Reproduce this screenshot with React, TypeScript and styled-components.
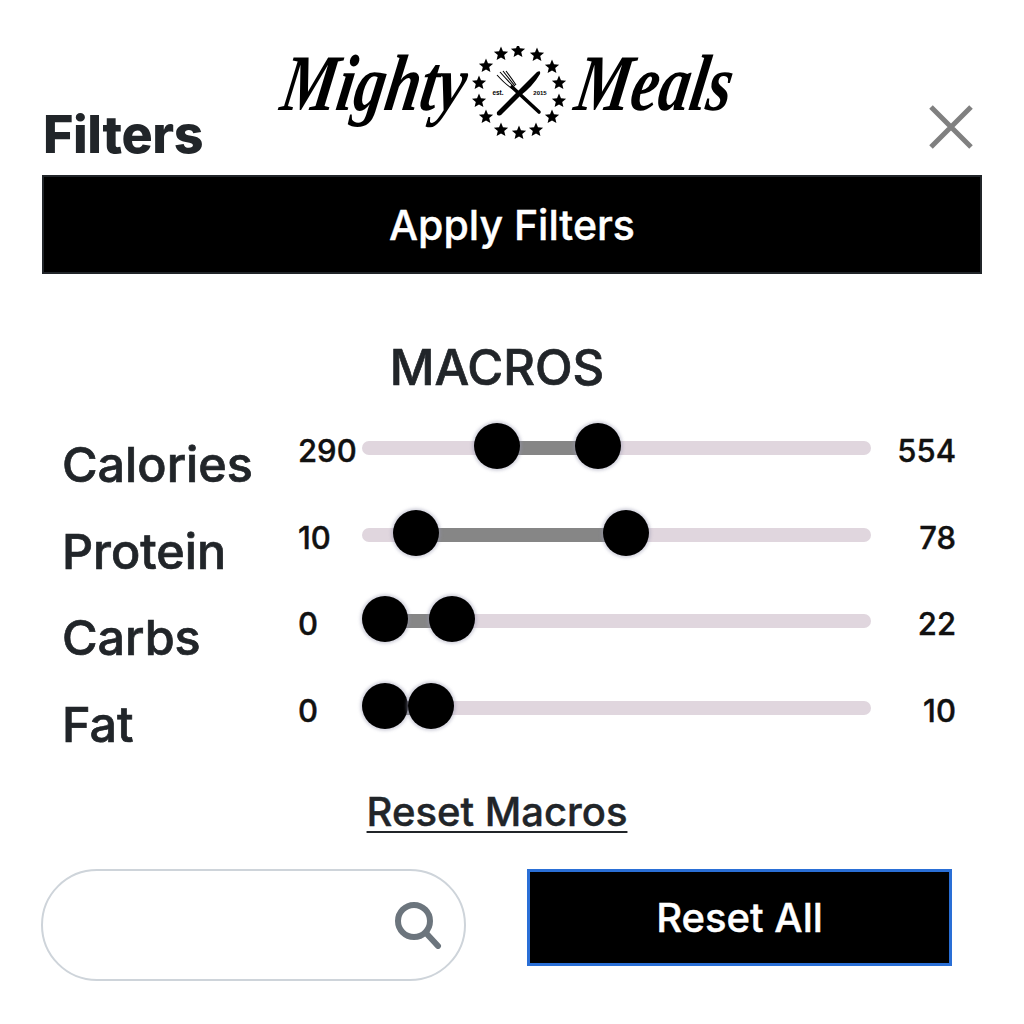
import React from 'react'
import styled, { createGlobalStyle } from 'styled-components'

const GlobalStyle = createGlobalStyle`
  html, body {
    margin: 0;
    background: #fff;
  }
  * {
    box-sizing: border-box;
  }
`

const Page = styled.div`
  width: 1024px;
  height: 1024px;
  padding: 0 42px;
  overflow: hidden;
  font-family: Inter, "Liberation Sans", sans-serif;
  color: #212529;
`

const Header = styled.header`
  height: 175px;
  position: relative;
  display: flex;
  align-items: flex-end;
  justify-content: space-between;
`

const Title = styled.h1`
  margin: 0 0 12px 1px;
  font-size: 52px;
  line-height: 56px;
  font-weight: 800;
  letter-spacing: -0.4px;
`

const Logo = styled.div`
  position: absolute;
  left: 238px;
  top: 45px;
  width: 456px;
  height: 96px;
  display: flex;
  align-items: center;
  color: #000;
`

const LogoWord = styled.span<{ $width: number; $scale: number }>`
  display: block;
  flex: none;
  align-self: flex-start;
  width: ${(p) => p.$width}px;
  font-family: "Liberation Serif", serif;
  font-style: italic;
  font-weight: 700;
  font-size: 80px;
  line-height: 76px;
  white-space: nowrap;
  transform-origin: left center;
  transform: translateX(3px) scaleX(${(p) => p.$scale}) skewX(-12deg);
`

const Emblem = styled.svg`
  flex: none;
  width: 96px;
  height: 94px;
  margin: 0 6px 0 7px;
`

const CloseButton = styled.button`
  width: 44px;
  height: 44px;
  margin: 0 9px 26px 0;
  padding: 0;
  border: 0;
  background: none;
  color: #808080;
  svg {
    display: block;
  }
`

const BlackButton = styled.button`
  display: block;
  background: #000;
  color: #fff;
  font-family: inherit;
  font-weight: 500;
  padding: 0;
  -webkit-text-stroke: 0.4px currentColor;
`

const ApplyButton = styled(BlackButton)`
  width: 940px;
  height: 99px;
  border: 2px solid #212529;
  font-size: 41px;
`

const SectionTitle = styled.h2`
  margin: 68px 0 31px;
  padding-right: 30px;
  text-align: center;
  font-size: 49px;
  line-height: 52px;
  font-weight: 500;
  -webkit-text-stroke: 0.7px currentColor;
`

const MacroList = styled.div`
  padding-left: 20px;
`

const MacroRow = styled.div`
  display: grid;
  grid-template-columns: 236px 64px 509px 85px;
  height: 86.5px;
`

const MacroLabel = styled.div`
  padding-top: 11px;
  font-size: 48.5px;
  line-height: 58px;
  font-weight: 500;
  -webkit-text-stroke: 0.7px currentColor;
`

const Value = styled.div<{ $end?: boolean }>`
  height: 46px;
  margin-top: 3px;
  font-size: 31px;
  line-height: 46px;
  font-weight: 500;
  color: #111;
  text-align: ${(p) => (p.$end ? 'right' : 'left')};
  -webkit-text-stroke: 0.4px currentColor;
`

const Track = styled.div`
  position: relative;
  height: 46px;
  &::before {
    content: '';
    position: absolute;
    left: 0;
    right: 0;
    top: 16px;
    height: 14px;
    border-radius: 7px;
    background: #e0d6de;
  }
`

const Range = styled.div`
  position: absolute;
  top: 16px;
  height: 14px;
  background: #868686;
`

const Thumb = styled.div`
  position: absolute;
  top: -2px;
  width: 46px;
  height: 46px;
  margin-left: -23px;
  border-radius: 50%;
  background: #000;
  box-shadow: 0 0 3px 2px rgba(150, 150, 175, 0.4);
`

const ResetMacros = styled.a`
  display: block;
  margin: 19px 0 35px;
  padding-right: 30px;
  text-align: center;
  font-size: 40px;
  line-height: 44px;
  font-weight: 500;
  color: #212529;
  text-decoration: underline;
  text-decoration-thickness: 2px;
  text-underline-offset: 5px;
  -webkit-text-stroke: 0.4px currentColor;
`

const BottomRow = styled.div`
  display: flex;
  align-items: flex-start;
  justify-content: space-between;
  padding-right: 30px;
`

const SearchBox = styled.div`
  width: 425px;
  height: 112px;
  margin-left: -1px;
  padding: 0 22px 0 30px;
  display: flex;
  align-items: center;
  border: 2px solid #ced4da;
  border-radius: 56px;
  color: #6c757d;
`

const SearchInput = styled.input`
  flex: 1;
  min-width: 0;
  border: 0;
  outline: 0;
  background: none;
  font-size: 30px;
`

const ResetAllButton = styled(BlackButton)`
  width: 425px;
  height: 97px;
  border: 3px solid #2a6fd6;
  font-size: 40px;
`

const macros = [
  { label: 'Calories', min: 290, max: 554, low: 0.265, high: 0.463 },
  { label: 'Protein', min: 10, max: 78, low: 0.106, high: 0.519 },
  { label: 'Carbs', min: 0, max: 22, low: 0.045, high: 0.177 },
  { label: 'Fat', min: 0, max: 10, low: 0.045, high: 0.136 },
]

const starPoints = (cx: number, cy: number, r: number) => {
  const pts: string[] = []
  for (let i = 0; i < 10; i++) {
    const radius = i % 2 === 0 ? r : r * 0.45
    const angle = -Math.PI / 2 + (i * Math.PI) / 5
    pts.push(`${(cx + radius * Math.cos(angle)).toFixed(2)},${(cy + radius * Math.sin(angle)).toFixed(2)}`)
  }
  return pts.join(' ')
}

const stars = [
  [58, 17], [77, 21], [92, 33], [99, 49], [99, 67], [92, 83], [76, 96],
  [59, 99], [41, 96], [26, 83], [19, 67], [19, 49], [26, 32], [41, 20],
]

const App: React.FC = () => {
  return (
    <Page>
      <GlobalStyle />
      <Header>
        <Title>Filters</Title>
        <Logo>
          <LogoWord $width={185} $scale={0.78}>Mighty</LogoWord>
          <Emblem viewBox="12 12 96 94">
            {stars.map(([x, y]) => (
              <polygon key={`${x}-${y}`} points={starPoints(x, y, 7.5)} fill="#000" />
            ))}
            {/* knife */}
            <path d="M37 78 L77 38 Q81 36 80 40 Q73 52 60 62 L41 81 Q36 83 37 78 Z" fill="#000" />
            {/* fork */}
            <path d="M79 78 L52 53" stroke="#000" strokeWidth="3.6" strokeLinecap="round" />
            <path d="M53 55 Q46 51 37 41 M54 53 Q48 47 40 38 M55 52 Q50 46 43 37 M56 51 Q52 45 46 37" stroke="#000" strokeWidth="1.1" fill="none" />
            <text x="38" y="61" textAnchor="middle" fontFamily="'Liberation Sans', sans-serif" fontWeight="700" fontSize="6.5">est.</text>
            <text x="80" y="61" textAnchor="middle" fontFamily="'Liberation Sans', sans-serif" fontWeight="700" fontSize="6">2015</text>
          </Emblem>
          <LogoWord $width={160} $scale={0.78}>Meals</LogoWord>
        </Logo>
        <CloseButton aria-label="Close">
          <svg width="44" height="44" viewBox="0 0 44 44">
            <path d="M2 2 L42 42 M42 2 L2 42" stroke="currentColor" strokeWidth="5" fill="none" />
          </svg>
        </CloseButton>
      </Header>
      <ApplyButton>Apply Filters</ApplyButton>
      <SectionTitle>MACROS</SectionTitle>
      <MacroList>
        {macros.map((m) => (
          <MacroRow key={m.label}>
            <MacroLabel>{m.label}</MacroLabel>
            <Value>{m.min}</Value>
            <Track>
              <Range style={{ left: `${m.low * 100}%`, width: `${(m.high - m.low) * 100}%` }} />
              <Thumb style={{ left: `${m.low * 100}%` }} />
              <Thumb style={{ left: `${m.high * 100}%` }} />
            </Track>
            <Value $end>{m.max}</Value>
          </MacroRow>
        ))}
      </MacroList>
      <ResetMacros href="#">Reset Macros</ResetMacros>
      <BottomRow>
        <SearchBox>
          <SearchInput />
          <svg width="48" height="48" viewBox="0 0 48 48">
            <circle cx="20" cy="20" r="16" stroke="currentColor" strokeWidth="6" fill="none" />
            <path d="M32 32 L44 45" stroke="currentColor" strokeWidth="6" strokeLinecap="round" />
          </svg>
        </SearchBox>
        <ResetAllButton>Reset All</ResetAllButton>
      </BottomRow>
    </Page>
  )
}

export default App
